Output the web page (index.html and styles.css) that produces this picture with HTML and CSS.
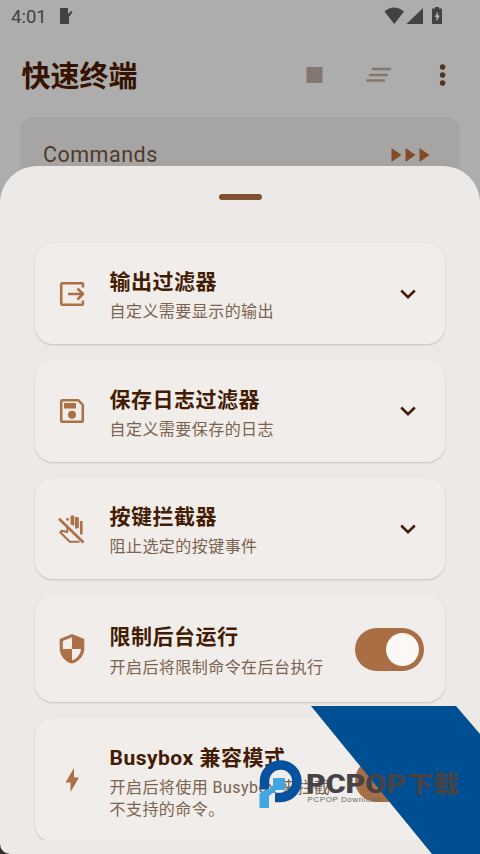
FILE: index.html
```html
<!DOCTYPE html>
<html lang="zh-CN">
<head>
<meta charset="utf-8">
<title>快速终端</title>
<link rel="stylesheet" href="styles.css">
</head>
<body>
<div class="screen">
  <header class="status">
    <span class="clock">4:01</span>
    <svg class="status-app" width="14" height="17" viewBox="0 0 14 17"><path d="M1 0h8v6l3.200-3 1.200 1.300L10 9v7H1z"/></svg>
    <svg class="status-icons" width="60" height="18" viewBox="0 0 60 18">
      <path d="M.5 4.500Q10-3.500 20 4.500L10.200 17zM22.500 17 39 1v16zM51 1.500V0h4v1.500h3V17H48V1.500z"/>
      <path class="bolt" d="M54 4.500 50.500 10h2v4.500L56 8.500h-2z"/>
    </svg>
  </header>
  <div class="appbar">
    <h1>快速终端</h1>
    <svg class="tools" width="144" height="24" viewBox="0 0 144 24">
      <path class="muted" d="M.5 4h16v16H.5zM66 4.700h19v2.600H66zM63 10.700h19v2.600H63zM60.500 16.200h18.500v2.600H60.500z"/>
      <g class="more"><circle cx="136.600" cy="4" r="2.800"/><circle cx="136.600" cy="12" r="2.800"/><circle cx="136.600" cy="20" r="2.800"/></g>
    </svg>
  </div>
  <section class="commands">
    <span>Commands</span>
    <svg width="39" height="14" viewBox="0 0 39 14"><path d="M.5 0 10.500 7 .5 14zM14.500 0l10 7-10 7zM28.500 0l10 7-10 7z"/></svg>
  </section>

  <main class="sheet">
    <div class="handle"></div>
    <div class="list">
      <article class="card">
        <svg class="icon" width="30" height="30" viewBox="0 0 30 30"><path class="line" d="M26 8.500V5.200Q26 4.200 25 4.200H5.200q-1 0-1 1v19.600q0 1 1 1H25q1 0 1-1V21.500M11 15h15M20.500 9.500 26 15l-5.500 5.500"/></svg>
        <div class="copy"><h2>输出过滤器</h2><p>自定义需要显示的输出</p></div>
        <svg class="chevron" width="16" height="10" viewBox="0 0 16 10"><path d="M1.200 1.500 8 8.200l6.800-6.700"/></svg>
      </article>
      <article class="card">
        <svg class="icon" width="30" height="30" viewBox="0 0 30 30"><path class="line" d="M5.200 4.200h16L25.800 9v15.800q0 1-1 1H5.200q-1 0-1-1V5.200q0-1 1-1z"/><path d="M7 7h12v5.500H7z"/><circle cx="15" cy="18.800" r="4"/></svg>
        <div class="copy"><h2>保存日志过滤器</h2><p>自定义需要保存的日志</p></div>
        <svg class="chevron" width="16" height="10" viewBox="0 0 16 10"><path d="M1.200 1.500 8 8.200l6.800-6.700"/></svg>
      </article>
      <article class="card">
        <svg class="icon" width="30" height="30" viewBox="0 0 30 30">
          <path class="finger" d="M10.500 4v2.500M14.800 1.800v9M19.300 3v11.500M24.300 7v13.500"/>
          <path class="finger thin" d="M10.300 11.500v6.500l-5.800-1.200-1.300 1.500 9.600 9.500h9.700M14.800 2.500h1.500v9M19.300 4h1.500v10"/>
          <path class="finger" d="M2 4.800 26.500 28.500"/>
        </svg>
        <div class="copy"><h2>按键拦截器</h2><p>阻止选定的按键事件</p></div>
        <svg class="chevron" width="16" height="10" viewBox="0 0 16 10"><path d="M1.200 1.500 8 8.200l6.800-6.700"/></svg>
      </article>
      <article class="card tall">
        <svg class="icon" width="30" height="30" viewBox="0 0 30 30"><path fill-rule="evenodd" d="M15 0 27.300 5v9.500C27.300 21.500 22 27.800 15 29.500 8 27.800 2.700 21.500 2.700 14.500V5zM15 3.200 5.800 7v8H15zM15 15v11.400c5-1.600 8.500-6 9.100-11.400z"/></svg>
        <div class="copy"><h2>限制后台运行</h2><p>开启后将限制命令在后台执行</p></div>
        <div class="switch"><i></i></div>
      </article>
      <article class="card last">
        <svg class="icon" width="30" height="30" viewBox="0 0 30 30"><path d="M17 3v9.500h5L13.500 27v-9.500h-5z"/></svg>
        <div class="copy"><h2>Busybox 兼容模式</h2><p>开启后将使用 Busybox 来拦截<br>不支持的命令。</p></div>
        <div class="switch"><i></i></div>
      </article>
    </div>
  </main>

  <svg class="watermark" width="230" height="148" viewBox="250 706 230 148">
    <path class="band" d="M311 706h145l24 28v120h-48z"/>
    <path class="ring" d="M264.500 789.500V781a16.200 16.200 0 1 1 16.200 16.400H275"/>
    <path class="sky" d="M273 778h12v12h-8.500l-7.500 6v12h-9.500v-14.500l5.500-3.500h3.500l4.500-4z"/>
    <text class="brand" x="306" y="793" textLength="100" lengthAdjust="spacingAndGlyphs">PCPOP</text>
    <text class="brand-cn" x="407" y="792" textLength="52" lengthAdjust="spacingAndGlyphs">下载</text>
    <text class="brand-sub" x="307.500" y="802.300" textLength="73" lengthAdjust="spacing">PCPOP Download</text>
  </svg>
</div>
</body>
</html>
```
FILE: styles.css
```css
* { box-sizing: border-box; }
body { margin: 0; background: #2a2829; }
h1, h2, p { margin: 0; }
svg { display: block; flex: none; }

.screen {
  position: relative;
  width: 480px;
  height: 854px;
  overflow: hidden;
  background: linear-gradient(#adadad 800px, #2f2d2e 0);
  font-family: Roboto, "Noto Sans CJK SC", sans-serif;
}

.status {
  display: flex;
  align-items: center;
  height: 32px;
  padding: 0 36px 0 11px;
  color: #424242;
  fill: #424242;
}
.clock { width: 48px; padding-top: 1px; font-size: 18.500px; }
.status-icons { margin-left: auto; }
.bolt { fill: #adadad; }

.appbar {
  display: flex;
  align-items: center;
  justify-content: space-between;
  height: 85px;
  padding: 0 30px 0 21.500px;
}
h1 { padding-top: 5px; font-size: 29px; line-height: 40px; font-weight: 700; color: #351300; }
.muted { fill: #85776d; }
.more { fill: #53351f; }

.commands {
  display: flex;
  justify-content: space-between;
  align-items: center;
  height: 90px;
  margin: 0 20px;
  padding: 0 30px 15px 23px;
  border-radius: 14px;
  background: #a6a5a4;
  color: #4f3a2a;
  font-size: 21.500px;
  letter-spacing: .5px;
}
.commands svg { fill: #834c27; }

.sheet {
  position: absolute;
  inset: 165.500px 0 0;
  padding: 28.500px 35px 14px;
  border-radius: 37px 37px 10px 10px;
  background: #ede9e6;
}
.handle { width: 43px; height: 6px; margin: 0 auto 42.500px; border-radius: 3px; background: #7c5233; }
.list {
  display: flex;
  flex-direction: column;
  gap: 16px;
  height: 597.500px;
  margin: 0 -5px;
  padding: 0 5px;
  overflow: hidden;
}
.card {
  display: flex;
  align-items: center;
  flex: none;
  height: 101.500px;
  padding: 1px 21px 0 22px;
  border-radius: 18px;
  background: #f0edea;
  box-shadow: 0 1px 2px rgba(70, 50, 40, .22);
}
.tall { height: 106px; margin-top: .7px; }
.last { height: 124px; padding-bottom: 0; }
.icon { fill: #ac6f46; }
.line { fill: none; stroke: #ac6f46; stroke-width: 2.500; stroke-linejoin: round; }
.finger { fill: none; stroke: #ac6f46; stroke-width: 2.600; stroke-linejoin: round; }
.thin { stroke-width: 2; }
.copy { flex: 1; margin-left: 22.500px; padding-top: 2px; }
h2 { font-size: 21px; line-height: 30px; letter-spacing: .5px; font-weight: 700; color: #431c03; white-space: nowrap; }
p { font-size: 16px; line-height: 21.500px; letter-spacing: .45px; padding-top: 4px; color: #7b634f; white-space: nowrap; }
.tall h2 { line-height: 31px; }
.tall .copy { padding-top: 2px; margin-right: -20px; }
.last .copy { padding-top: 3px; }
.chevron { margin-right: 8px; fill: none; stroke: #421c0b; stroke-width: 2.500; }
.switch {
  flex: none;
  width: 69px;
  height: 43px;
  padding: 5px;
  border-radius: 22px;
  background: #a96e44;
}
.switch i { display: block; width: 33px; height: 33px; margin-left: auto; border-radius: 50%; background: #fbf8f5; }

.watermark { position: absolute; right: 0; bottom: 0; }
.band { fill: #004f93; }
.ring { fill: none; stroke: #0752a0; stroke-width: 9.500; }
.sky { fill: #40a7e2; }
.brand, .brand-cn { fill: #444448; font-weight: 900; }
.brand { font-family: Roboto, sans-serif; font-size: 25px; }
.brand-cn { font-family: "Noto Sans CJK SC", sans-serif; font-size: 23px; }
.brand-sub { fill: #6b6968; font-family: "Liberation Sans", sans-serif; font-size: 8px; }
```
